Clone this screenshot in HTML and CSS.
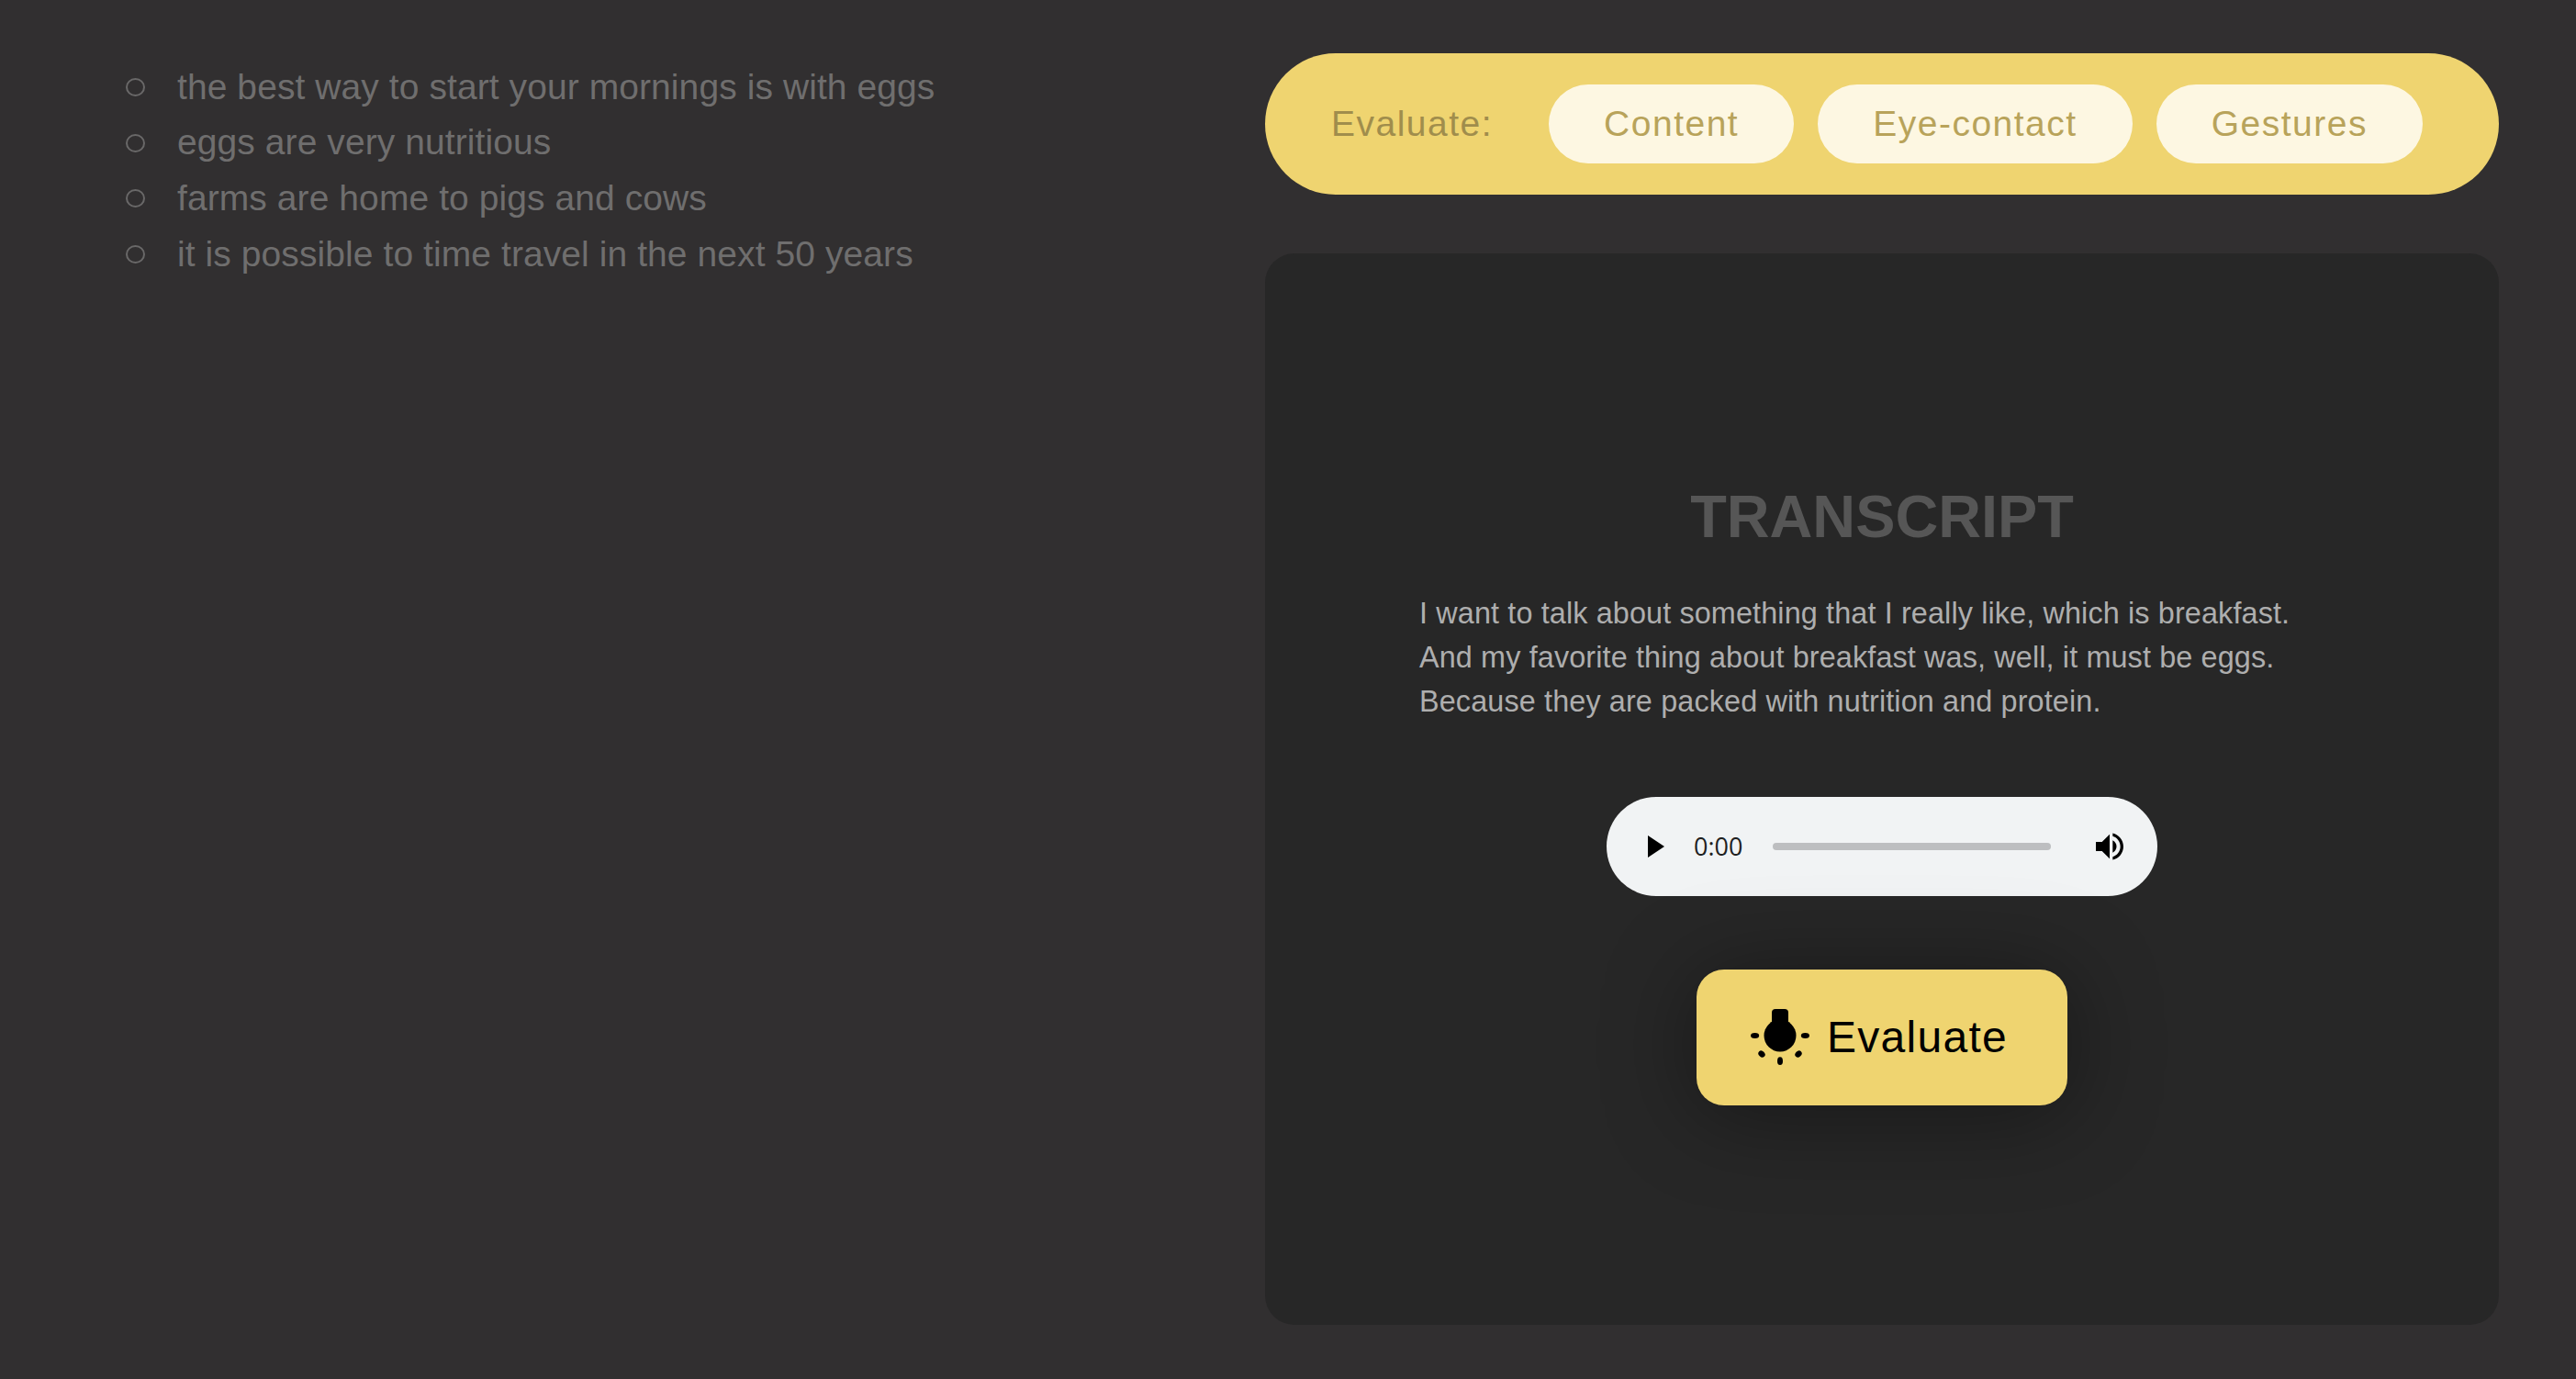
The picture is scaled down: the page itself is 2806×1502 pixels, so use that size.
FILE: index.html
```html
<!DOCTYPE html>
<html lang="en">
<head>
    <meta charset="UTF-8">
    <title>Transcript</title>
    <link rel="stylesheet" href="styles.css">
</head>
<body>
    <div class="page">
        <ul class="points">
            <li>the best way to start your mornings is with eggs</li>
            <li>eggs are very nutritious</li>
            <li>farms are home to pigs and cows</li>
            <li>it is possible to time travel in the next 50 years</li>
        </ul>

        <div class="right-col">
            <div class="eval-bar">
                <span class="eval-label">Evaluate:</span>
                <button class="eval-option">Content</button>
                <button class="eval-option">Eye-contact</button>
                <button class="eval-option">Gestures</button>
            </div>

            <div class="panel">
                <h1 class="panel-title">TRANSCRIPT</h1>
                <p class="transcript">I want to talk about something that I really like, which is breakfast.<br>And my favorite thing about breakfast was, well, it must be eggs.<br>Because they are packed with nutrition and protein.</p>

                <div class="player">
                    <svg class="play-icon" viewBox="0 0 18 24"><path d="M0 0L18 12L0 24Z"/></svg>
                    <span class="player-time">0:00</span>
                    <div class="player-track"></div>
                    <svg class="volume-icon" viewBox="3 3 18 18"><path d="M3 9v6h4l5 5V4L7 9H3z"/><path d="M16.5 12c0-1.77-1.02-3.29-2.5-4.03v8.05c1.48-.73 2.5-2.25 2.5-4.02z"/><path d="M14 3.23v2.06c2.89.86 5 3.54 5 6.71s-2.11 5.85-5 6.71v2.06c4.01-.91 7-4.49 7-8.77s-2.99-7.86-7-8.77z"/></svg>
                </div>

                <button class="evaluate-btn">
                    <svg class="bulb-icon" viewBox="0 0 64 62">
                        <path d="M23 4a4 4 0 0 1 4-4h10a4 4 0 0 1 4 4v12h-18z"/>
                        <circle cx="32" cy="29" r="17.5"/>
                        <ellipse cx="4.6" cy="29" rx="4.6" ry="3"/>
                        <ellipse cx="59.4" cy="29" rx="4.6" ry="3"/>
                        <ellipse cx="12" cy="49" rx="3.2" ry="4" transform="rotate(-45 12 49)"/>
                        <ellipse cx="52" cy="49" rx="3.2" ry="4" transform="rotate(45 52 49)"/>
                        <ellipse cx="32" cy="56.7" rx="3" ry="4.4"/>
                    </svg>
                    <span>Evaluate</span>
                </button>
            </div>
        </div>
    </div>
</body>
</html>
```

FILE: styles.css
```css
* {
    box-sizing: border-box;
}

body {
    margin: 0;
    background: #312f30;
    font-family: "Liberation Sans", Arial, sans-serif;
}

.page {
    display: grid;
    grid-template-columns: 1fr 1344px;
    height: 1502px;
    padding: 58px 84px 59px 0;
}

.points {
    margin: 0;
    padding: 6.5px 0 0 137px;
    list-style: none;
    font-size: 39px;
    line-height: 60.8px;
    letter-spacing: 0.08px;
    color: #6f6e6e;
}

.points li {
    display: flex;
    align-items: center;
    gap: 35px;
}

.points li::before {
    content: "";
    width: 17px;
    height: 16px;
    border: 2px solid #696868;
    border-radius: 50%;
}

.right-col {
    display: flex;
    flex-direction: column;
    gap: 64px;
}

.eval-bar {
    display: flex;
    align-items: center;
    gap: 26px;
    height: 154px;
    padding: 0 83px 0 72px;
    background: #efd470;
    border-radius: 77px;
}

.eval-label {
    margin-right: 35px;
    font-size: 39px;
    letter-spacing: 1.5px;
    color: #a08d4c;
}

.eval-option {
    height: 86px;
    padding: 0 60px;
    border: none;
    border-radius: 43px;
    background: #fdf7e2;
    font-family: inherit;
    font-size: 39px;
    letter-spacing: 1.5px;
    color: #b8a35a;
}

.panel {
    flex: 1;
    display: flex;
    flex-direction: column;
    align-items: center;
    justify-content: center;
    padding-top: 10px;
    background: #272727;
    border-radius: 32px;
}

.panel-title {
    margin: 0 0 44px;
    font-size: 64.8px;
    line-height: 74px;
    color: #565656;
}

.transcript {
    width: 1008px;
    margin: 0 0 80px;
    font-size: 32.4px;
    line-height: 48px;
    letter-spacing: 0.12px;
    color: #aeaeae;
}

.player {
    display: flex;
    align-items: center;
    width: 600px;
    height: 108px;
    padding: 0 37px 0 45px;
    margin-bottom: 80px;
    background: #f1f3f4;
    border-radius: 54px;
}

.play-icon {
    width: 18px;
    height: 24px;
    margin-right: 32px;
}

.player-time {
    margin-right: 33px;
    font-family: "Open Sans", sans-serif;
    font-size: 27px;
    color: #1f1f1f;
}

.player-track {
    flex: 1;
    height: 8px;
    margin-right: 49px;
    background: #bdbec0;
    border-radius: 4px;
}

.volume-icon {
    width: 30px;
    height: 30px;
}

.evaluate-btn {
    position: relative;
    display: flex;
    align-items: center;
    justify-content: center;
    gap: 19px;
    width: 404px;
    height: 148px;
    padding: 0 6px 0 0;
    border: none;
    border-radius: 30px;
    background: #efd470;
    font-family: inherit;
    font-size: 48px;
    letter-spacing: 1.3px;
    color: #000;
    box-shadow: 0 8px 100px rgba(0, 0, 0, 0.4);
}

.bulb-icon {
    width: 64px;
    height: 62px;
}
```
